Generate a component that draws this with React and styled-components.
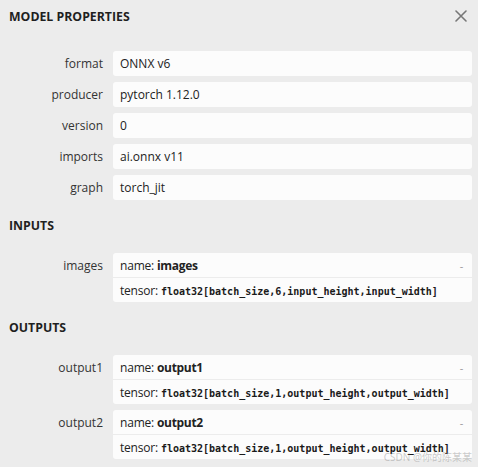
import styled, { createGlobalStyle } from 'styled-components';

const GlobalStyle = createGlobalStyle`
    html, body {
        margin: 0;
        padding: 0;
        background: #ececec;
    }
    body {
        font-family: 'Open Sans', 'Noto Sans', sans-serif;
        font-size: 12px;
        color: #222;
    }
`;

const properties = [
    { name: 'format', value: 'ONNX v6' },
    { name: 'producer', value: 'pytorch 1.12.0' },
    { name: 'version', value: '0' },
    { name: 'imports', value: 'ai.onnx v11' },
    { name: 'graph', value: 'torch_jit' },
];

const inputs = [
    { name: 'images', type: 'float32[batch_size,6,input_height,input_width]' },
];

const outputs = [
    { name: 'output1', type: 'float32[batch_size,1,output_height,output_width]' },
    { name: 'output2', type: 'float32[batch_size,1,output_height,output_width]' },
];

const CloseIcon = () => (
    <svg width="12" height="12" viewBox="0 0 12 12">
        <path d="M1 1 L11 11 M11 1 L1 11" stroke="#777" strokeWidth="1.6" strokeLinecap="round" />
    </svg>
);

const Argument = ({ item }) => (
    <Row>
        <Label>{item.name}</Label>
        <Card>
            <Line>
                <span>
                    name: <b>{item.name}</b>
                </span>
                <Toggle>-</Toggle>
            </Line>
            <Line $last>
                <span>
                    tensor: <Code>{item.type}</Code>
                </span>
            </Line>
        </Card>
    </Row>
);

const App = () => {
    return (
        <Sidebar>
            <GlobalStyle />
            <Header>
                <Title>MODEL PROPERTIES</Title>
                <CloseButton>
                    <CloseIcon />
                </CloseButton>
            </Header>
            <Rows $top={19}>
                {properties.map((p) => (
                    <Row key={p.name}>
                        <Label>{p.name}</Label>
                        <Value>{p.value}</Value>
                    </Row>
                ))}
            </Rows>
            <SectionTitle>INPUTS</SectionTitle>
            <Rows>
                {inputs.map((i) => (
                    <Argument key={i.name} item={i} />
                ))}
            </Rows>
            <SectionTitle>OUTPUTS</SectionTitle>
            <Rows>
                {outputs.map((o) => (
                    <Argument key={o.name} item={o} />
                ))}
            </Rows>
            <Watermark>CSDN @你的陈某某</Watermark>
        </Sidebar>
    );
};

const Sidebar = styled.div`
    position: relative;
    width: 478px;
    height: 467px;
    overflow: hidden;
    background: #ececec;
`;

const Header = styled.div`
    display: flex;
    align-items: center;
    justify-content: space-between;
    height: 32px;
    padding: 0 10px 0 9px;
`;

const Title = styled.div`
    font-weight: 700;
    font-size: 12.3px;
    color: #1f1f1f;
`;

const CloseButton = styled.div`
    display: flex;
    align-items: center;
    justify-content: center;
    width: 14px;
    height: 14px;
`;

const Rows = styled.div`
    display: flex;
    flex-direction: column;
    gap: 6px;
    padding-right: 6px;
    margin-top: ${(p) => p.$top || 0}px;
`;

const Row = styled.div`
    display: grid;
    grid-template-columns: 103px 1fr;
    column-gap: 10px;
    align-items: start;
`;

const Label = styled.div`
    text-align: right;
    line-height: 25px;
    color: #333;
    white-space: nowrap;
`;

const Value = styled.div`
    height: 25px;
    line-height: 25px;
    padding-left: 7px;
    background: #fcfcfc;
    border-radius: 3px;
    color: #222;
`;

const Card = styled.div`
    background: #fcfcfc;
    border-radius: 3px;
    overflow: hidden;
`;

const Line = styled.div`
    display: flex;
    align-items: center;
    justify-content: space-between;
    height: 24px;
    padding: 0 9px 0 7px;
    border-bottom: ${(p) => (p.$last ? 'none' : '1px solid #ececec')};
    color: #222;
    white-space: nowrap;
    letter-spacing: -0.2px;
    b {
        font-weight: 700;
        letter-spacing: -0.3px;
    }
`;

const Toggle = styled.span`
    color: #999;
    font-size: 11px;
`;

const Code = styled.span`
    font-family: 'DejaVu Sans Mono', 'Liberation Mono', monospace;
    font-size: 10px;
    font-weight: 700;
    letter-spacing: 0;
    color: #1a1a1a;
`;

const SectionTitle = styled.div`
    font-weight: 700;
    font-size: 12.3px;
    color: #1f1f1f;
    padding-left: 9px;
    line-height: 20px;
    margin: 16px 0 17px;
`;

const Watermark = styled.div`
    position: absolute;
    right: 6px;
    bottom: 4px;
    font-family: 'Noto Sans', 'Noto Sans CJK SC', sans-serif;
    font-size: 10px;
    line-height: 12px;
    color: rgba(140, 140, 140, 0.45);
`;

export default App;
